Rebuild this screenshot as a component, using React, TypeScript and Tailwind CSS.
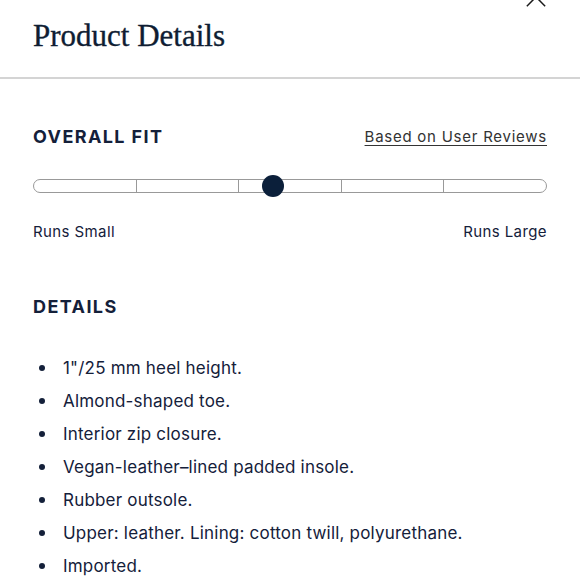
import React from "react";

const ITEMS = [
  "1\"/25 mm heel height.",
  "Almond-shaped toe.",
  "Interior zip closure.",
  "Vegan-leather–lined padded insole.",
  "Rubber outsole.",
  "Upper: leather. Lining: cotton twill, polyurethane.",
  "Imported.",
];

function FitScale() {
  return (
    <div className="relative h-[14px] w-full">
      <div className="flex h-full w-full overflow-hidden rounded-full border-[1.5px] border-[#999999]">
        {[0, 1, 2, 3, 4].map((i) => (
          <div key={i} className="flex-1 border-r-[1.5px] border-[#999999] last:border-r-0" />
        ))}
      </div>
      <div className="absolute left-[229px] top-[-4px] h-[22px] w-[22px] rounded-full bg-[#0b1f3a]" />
    </div>
  );
}

export default function App() {
  return (
    <div className="relative h-[580px] w-[580px] overflow-hidden bg-white text-[#14203a]" style={{ fontFamily: "Inter, 'Liberation Sans', sans-serif" }}>
      <button className="absolute right-[33px] top-[-14px] h-[22px] w-[22px]">
        <svg viewBox="0 0 24 24" className="h-full w-full" fill="none" stroke="#1a1a1a" strokeWidth="1.6">
          <path d="M2 2 L22 22 M22 2 L2 22" />
        </svg>
      </button>
      <header className="h-[79px] border-b-2 border-[#d4d4d4] px-[33px] pt-[15px]">
        <h1 className="text-[31px] leading-[42px] text-[#0f1d33] [-webkit-text-stroke:0.35px_#0f1d33]" style={{ fontFamily: "'Liberation Serif', serif" }}>
          Product Details
        </h1>
      </header>

      <section className="px-[33px] pt-[46px]">
        <div className="flex items-center justify-between">
          <h2 className="text-[18px] font-bold leading-[24px] tracking-[1.4px]">OVERALL FIT</h2>
          <a className="text-[15px] leading-[22px] tracking-[0.75px] text-[#333] underline underline-offset-[3px]">
            Based on User Reviews
          </a>
        </div>
        <div className="mt-[30px]">
          <FitScale />
        </div>
        <div className="mt-[28px] flex justify-between text-[15px] leading-[22px] tracking-[0.4px]">
          <span>Runs Small</span>
          <span>Runs Large</span>
        </div>
      </section>

      <section className="px-[33px] pt-[52px]">
        <h2 className="text-[18px] font-bold leading-[24px] tracking-[1.4px]">DETAILS</h2>
        <ul className="mt-[38px] flex flex-col gap-[11px]">
          {ITEMS.map((item) => (
            <li key={item} className="flex items-center text-[17px] leading-[22px] tracking-[0.2px]">
              <span className="ml-[6px] mr-[18px] h-[6px] w-[6px] rounded-full bg-[#14203a]" />
              {item}
            </li>
          ))}
        </ul>
      </section>
    </div>
  );
}
